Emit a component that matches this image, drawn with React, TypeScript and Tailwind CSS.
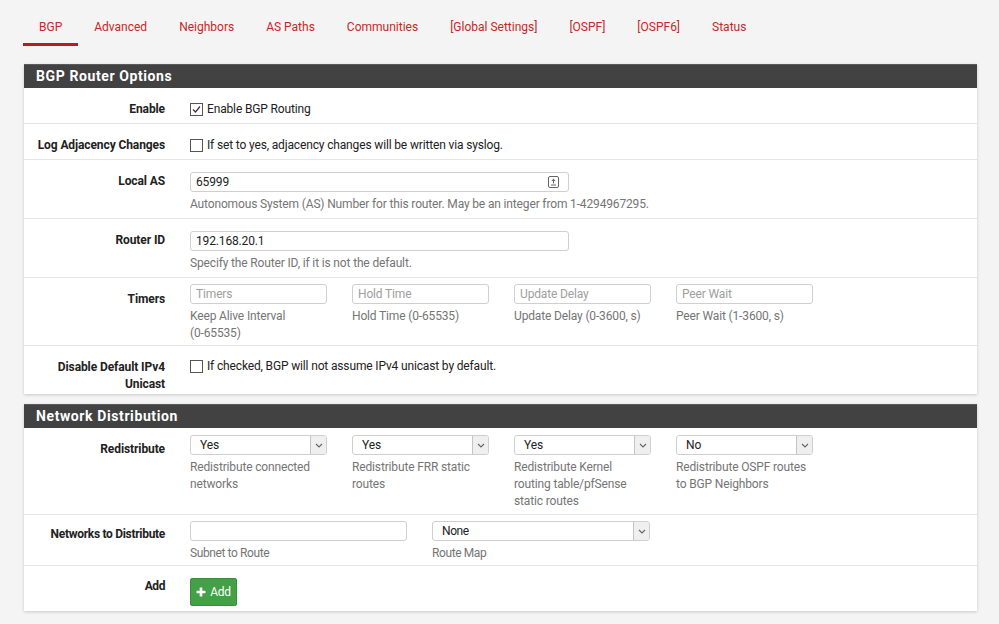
import type { ReactNode } from 'react'

const tabs = ['BGP', 'Advanced', 'Neighbors', 'AS Paths', 'Communities', '[Global Settings]', '[OSPF]', '[OSPF6]', 'Status']

function Checkbox({ checked }: { checked?: boolean }) {
  return (
    <span className="inline-flex w-[13px] h-[13px] border border-[#555] bg-white items-center justify-center mr-[4px] shrink-0">
      {checked && (
        <svg width="9" height="9" viewBox="0 0 9 9">
          <path d="M1 4.5 L3.5 7 L8 1.5" fill="none" stroke="#333" strokeWidth="1.2" />
        </svg>
      )}
    </span>
  )
}

function TextInput({ value, placeholder, width, icon }: { value?: string; placeholder?: string; width: string; icon?: boolean }) {
  return (
    <div className={`${width} h-[20px] border border-[#cfcfcf] rounded-[3px] bg-white flex items-center px-[5px] text-[12px] relative`}>
      {value ? <span className="text-[#212121]">{value}</span> : <span className="text-[#9e9e9e]">{placeholder}</span>}
      {icon && (
        <svg className="absolute right-[9px] top-[3px]" width="11" height="12" viewBox="0 0 11 12">
          <rect x="0.5" y="0.5" width="10" height="11" rx="1.5" fill="none" stroke="#666" />
          <path d="M5.5 2.5 L3.5 5 H7.5 Z" fill="#666" />
          <path d="M5.5 5 V7.5 M3 9 H8" stroke="#666" strokeWidth="1" />
        </svg>
      )}
    </div>
  )
}

function Select({ value, width }: { value: string; width: string }) {
  return (
    <div className={`${width} h-[20px] border border-[#cfcfcf] rounded-[3px] bg-white flex items-center text-[12px] text-[#212121]`}>
      <span className="flex-1 pl-[9px]">{value}</span>
      <span className="w-[16px] h-[18px] border-l border-[#c4c4c4] bg-[#efefef] flex items-center justify-center rounded-r-[2px]">
        <svg width="8" height="5" viewBox="0 0 8 5">
          <path d="M1 1 L4 4 L7 1" fill="none" stroke="#666" strokeWidth="1.1" />
        </svg>
      </span>
    </div>
  )
}

function Help({ children, className = '' }: { children: ReactNode; className?: string }) {
  return <div className={`mt-[4px] text-[12px] leading-[17px] text-[#757575] ${className}`}>{children}</div>
}

function Row({ label, children, pt = 'pt-[13px]', pb = 'pb-[5px]', last, labelClass = '' }: { label: ReactNode; children: ReactNode; pt?: string; pb?: string; last?: boolean; labelClass?: string }) {
  return (
    <div className={`flex ${last ? '' : 'border-b border-[#e4e4e4]'}`}>
      <div className={`w-[141px] shrink-0 text-right font-bold text-[12px] leading-[17px] text-[#212121] pt-[13px] tracking-[-0.1px] ${labelClass}`}>{label}</div>
      <div className={`ml-[25px] ${pt} ${pb}`}>{children}</div>
    </div>
  )
}

function Panel({ title, children }: { title: string; children: ReactNode }) {
  return (
    <div className="ml-[24px] w-[953px] bg-white shadow-[0_1px_3px_rgba(0,0,0,0.18)] mb-[10px]">
      <div className="h-[24px] bg-[#424242] border-t border-[#5a5a5a] px-[12px] text-white font-bold text-[14px] leading-[22px] tracking-[0.6px]">{title}</div>
      {children}
    </div>
  )
}

export default function App() {
  return (
    <div className="w-[999px] h-[624px] overflow-hidden bg-[#f4f4f4] font-['Roboto','Liberation_Sans',sans-serif] text-[12px] tracking-[-0.15px] text-[#212121]">
      <div className="flex pl-[23px] pt-[19px] mb-[18px] tracking-normal">
        {tabs.map((t, i) => (
          <div key={t} className={`px-[16px] pb-[7px] text-[12px] leading-[17px] text-[#c62828] border-b-[3px] ${i === 0 ? 'border-[#b71c1c]' : 'border-transparent'}`}>
            {t}
          </div>
        ))}
      </div>

      <Panel title="BGP Router Options">
        <Row label="Enable">
          <label className="flex items-center leading-[17px]"><Checkbox checked />Enable BGP Routing</label>
        </Row>
        <Row label="Log Adjacency Changes">
          <label className="flex items-center leading-[17px]"><Checkbox />If set to yes, adjacency changes will be written via syslog.</label>
        </Row>
        <Row label="Local AS" pt="pt-[12px]" pb="pb-[5px]">
          <TextInput value="65999" width="w-[379px]" icon />
          <Help>Autonomous System (AS) Number for this router. May be an integer from 1-4294967295.</Help>
        </Row>
        <Row label="Router ID" pt="pt-[12px]" pb="pb-[5px]">
          <TextInput value="192.168.20.1" width="w-[379px]" />
          <Help>Specify the Router ID, if it is not the default.</Help>
        </Row>
        <Row label="Timers" pt="pt-[6px]" pb="pb-[3px]">
          <div className="flex gap-[25px]">
            {[
              ['Timers', <>Keep Alive Interval <span className="whitespace-nowrap">(0-65535)</span></>],
              ['Hold Time', 'Hold Time (0-65535)'],
              ['Update Delay', 'Update Delay (0-3600, s)'],
              ['Peer Wait', 'Peer Wait (1-3600, s)'],
            ].map(([p, h], i) => (
              <div key={i} className="w-[137px]">
                <TextInput placeholder={p as string} width="w-[137px]" />
                <Help>{h}</Help>
              </div>
            ))}
          </div>
        </Row>
        <Row label={<>Disable Default IPv4<br />Unicast</>} pt="pt-[12px]" pb="pb-[6px]" labelClass="pb-[1px]" last>
          <label className="flex items-center leading-[17px]"><Checkbox />If checked, BGP will not assume IPv4 unicast by default.</label>
        </Row>
      </Panel>

      <Panel title="Network Distribution">
        <Row label="Redistribute" pt="pt-[7px]" pb="pb-[4px]">
          <div className="flex gap-[25px]">
            {[
              ['Yes', 'Redistribute connected networks'],
              ['Yes', 'Redistribute FRR static routes'],
              ['Yes', 'Redistribute Kernel routing table/pfSense static routes'],
              ['No', 'Redistribute OSPF routes to BGP Neighbors'],
            ].map(([v, h], i) => (
              <div key={i} className="w-[137px]">
                <Select value={v} width="w-[137px]" />
                <Help>{h}</Help>
              </div>
            ))}
          </div>
        </Row>
        <Row label="Networks to Distribute" pt="pt-[6px]" pb="pb-[3px]" labelClass="tracking-[-0.3px] !pt-[11px]">
          <div className="flex gap-[25px] tracking-[-0.4px]">
            <div>
              <TextInput width="w-[217px]" />
              <Help>Subnet to Route</Help>
            </div>
            <div>
              <Select value="None" width="w-[218px]" />
              <Help>Route Map</Help>
            </div>
          </div>
        </Row>
        <Row label="Add" pt="pt-[12px]" pb="pb-[5px]" labelClass="tracking-[-0.4px] !pt-[12px]" last>
          <button className="h-[28px] w-[47px] bg-[#43a047] border border-[#3b8f3f] rounded-[2px] text-white text-[12px] flex items-center justify-center gap-[4px] tracking-[-0.3px]">
            <svg width="10" height="10" viewBox="0 0 10 10">
              <path d="M5 0.5 V9.5 M0.5 5 H9.5" stroke="#fff" strokeWidth="2.6" />
            </svg>
            Add
          </button>
        </Row>
      </Panel>
    </div>
  )
}
